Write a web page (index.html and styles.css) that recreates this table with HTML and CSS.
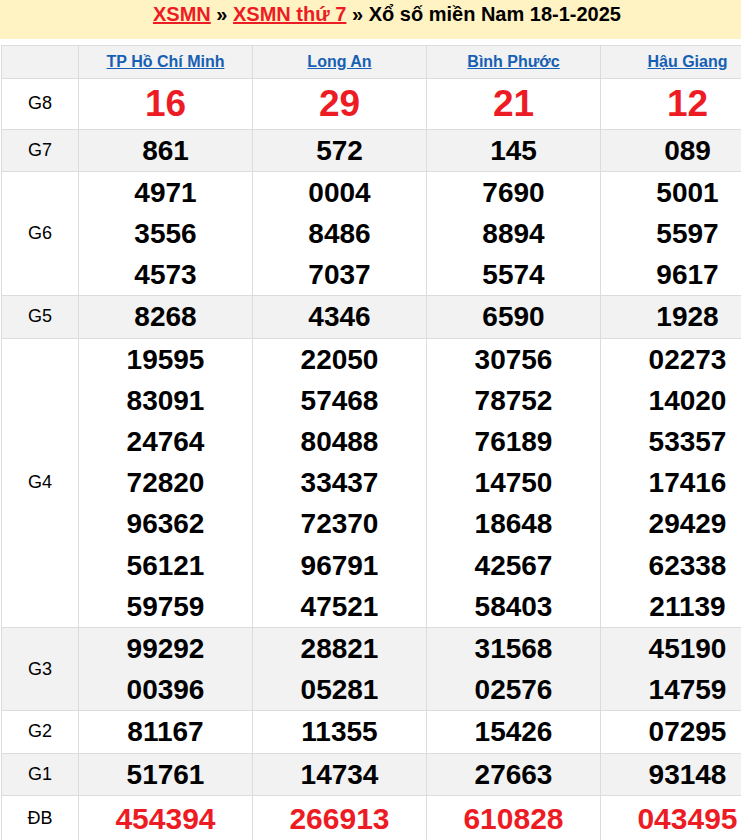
FILE: index.html
```html
<!DOCTYPE html>
<html lang="vi">
<head>
<meta charset="utf-8">
<title>XSMN 18-1-2025</title>
<link rel="stylesheet" href="styles.css">
</head>
<body>
<div class="viewport">
<div class="page">
  <h1 class="title"><a href="#" class="crumb">XSMN</a> » <a href="#" class="crumb">XSMN thứ 7</a> » Xổ số miền Nam 18-1-2025</h1>
  <table class="kq">
    <colgroup>
      <col class="c-label"><col class="c-prov"><col class="c-prov"><col class="c-prov"><col class="c-prov">
    </colgroup>
    <thead>
      <tr class="alt head">
        <th></th>
        <th><a href="#" class="prov">TP Hồ Chí Minh</a></th>
        <th><a href="#" class="prov">Long An</a></th>
        <th><a href="#" class="prov">Bình Phước</a></th>
        <th><a href="#" class="prov">Hậu Giang</a></th>
      </tr>
    </thead>
    <tbody>
      <tr class="g8">
        <td class="lbl">G8</td>
        <td><div class="n big">16</div></td>
        <td><div class="n big">29</div></td>
        <td><div class="n big">21</div></td>
        <td><div class="n big">12</div></td>
      </tr>
      <tr class="alt">
        <td class="lbl">G7</td>
        <td><div class="n">861</div></td>
        <td><div class="n">572</div></td>
        <td><div class="n">145</div></td>
        <td><div class="n">089</div></td>
      </tr>
      <tr>
        <td class="lbl">G6</td>
        <td><div class="n">4971</div><div class="n">3556</div><div class="n">4573</div></td>
        <td><div class="n">0004</div><div class="n">8486</div><div class="n">7037</div></td>
        <td><div class="n">7690</div><div class="n">8894</div><div class="n">5574</div></td>
        <td><div class="n">5001</div><div class="n">5597</div><div class="n">9617</div></td>
      </tr>
      <tr class="alt">
        <td class="lbl">G5</td>
        <td><div class="n">8268</div></td>
        <td><div class="n">4346</div></td>
        <td><div class="n">6590</div></td>
        <td><div class="n">1928</div></td>
      </tr>
      <tr>
        <td class="lbl">G4</td>
        <td><div class="n">19595</div><div class="n">83091</div><div class="n">24764</div><div class="n">72820</div><div class="n">96362</div><div class="n">56121</div><div class="n">59759</div></td>
        <td><div class="n">22050</div><div class="n">57468</div><div class="n">80488</div><div class="n">33437</div><div class="n">72370</div><div class="n">96791</div><div class="n">47521</div></td>
        <td><div class="n">30756</div><div class="n">78752</div><div class="n">76189</div><div class="n">14750</div><div class="n">18648</div><div class="n">42567</div><div class="n">58403</div></td>
        <td><div class="n">02273</div><div class="n">14020</div><div class="n">53357</div><div class="n">17416</div><div class="n">29429</div><div class="n">62338</div><div class="n">21139</div></td>
      </tr>
      <tr class="alt">
        <td class="lbl">G3</td>
        <td><div class="n">99292</div><div class="n">00396</div></td>
        <td><div class="n">28821</div><div class="n">05281</div></td>
        <td><div class="n">31568</div><div class="n">02576</div></td>
        <td><div class="n">45190</div><div class="n">14759</div></td>
      </tr>
      <tr>
        <td class="lbl">G2</td>
        <td><div class="n">81167</div></td>
        <td><div class="n">11355</div></td>
        <td><div class="n">15426</div></td>
        <td><div class="n">07295</div></td>
      </tr>
      <tr class="alt">
        <td class="lbl">G1</td>
        <td><div class="n">51761</div></td>
        <td><div class="n">14734</div></td>
        <td><div class="n">27663</div></td>
        <td><div class="n">93148</div></td>
      </tr>
      <tr class="db">
        <td class="lbl">ĐB</td>
        <td><div class="n red">454394</div></td>
        <td><div class="n red">266913</div></td>
        <td><div class="n red">610828</div></td>
        <td><div class="n red">043495</div></td>
      </tr>
    </tbody>
  </table>
</div>
</div>
</body>
</html>
```

FILE: styles.css
```css
html, body {
  margin: 0;
  padding: 0;
  background: #fff;
}

.viewport {
  width: 741px;
  overflow: hidden;
}

.page {
  width: 774px;
  font-family: "Liberation Sans", Arial, sans-serif;
  color: #000;
}

.title {
  margin: 0 0 6px;
  height: 39px;
  line-height: 29px;
  background: #fff2c3;
  font-size: 20px;
  font-weight: bold;
  text-align: center;
}

.crumb {
  color: #ed1c24;
  text-decoration: underline;
}

.kq {
  margin-left: 1px;
  border-collapse: collapse;
  table-layout: fixed;
  width: 772px;
}

.c-label { width: 77px; }
.c-prov { width: 174px; }

.kq th,
.kq td {
  border: 1px solid #dcdcdc;
  padding: 0;
  text-align: center;
  vertical-align: middle;
}

.kq .alt th,
.kq .alt td {
  background: #f2f2f2;
}

.head th {
  height: 31.5px;
}

.prov {
  color: #1660b4;
  font-size: 16px;
  font-weight: bold;
  text-decoration: underline;
}

.lbl {
  font-size: 18px;
  font-weight: normal;
}

.n {
  font-size: 28px;
  font-weight: bold;
  line-height: 41.2px;
}

.g8 td {
  height: 50px;
}

.n.big {
  font-size: 37px;
  line-height: 50px;
  color: #ed1c24;
}

.n.red {
  font-size: 30px;
  color: #ed1c24;
  line-height: 46px;
}
```
